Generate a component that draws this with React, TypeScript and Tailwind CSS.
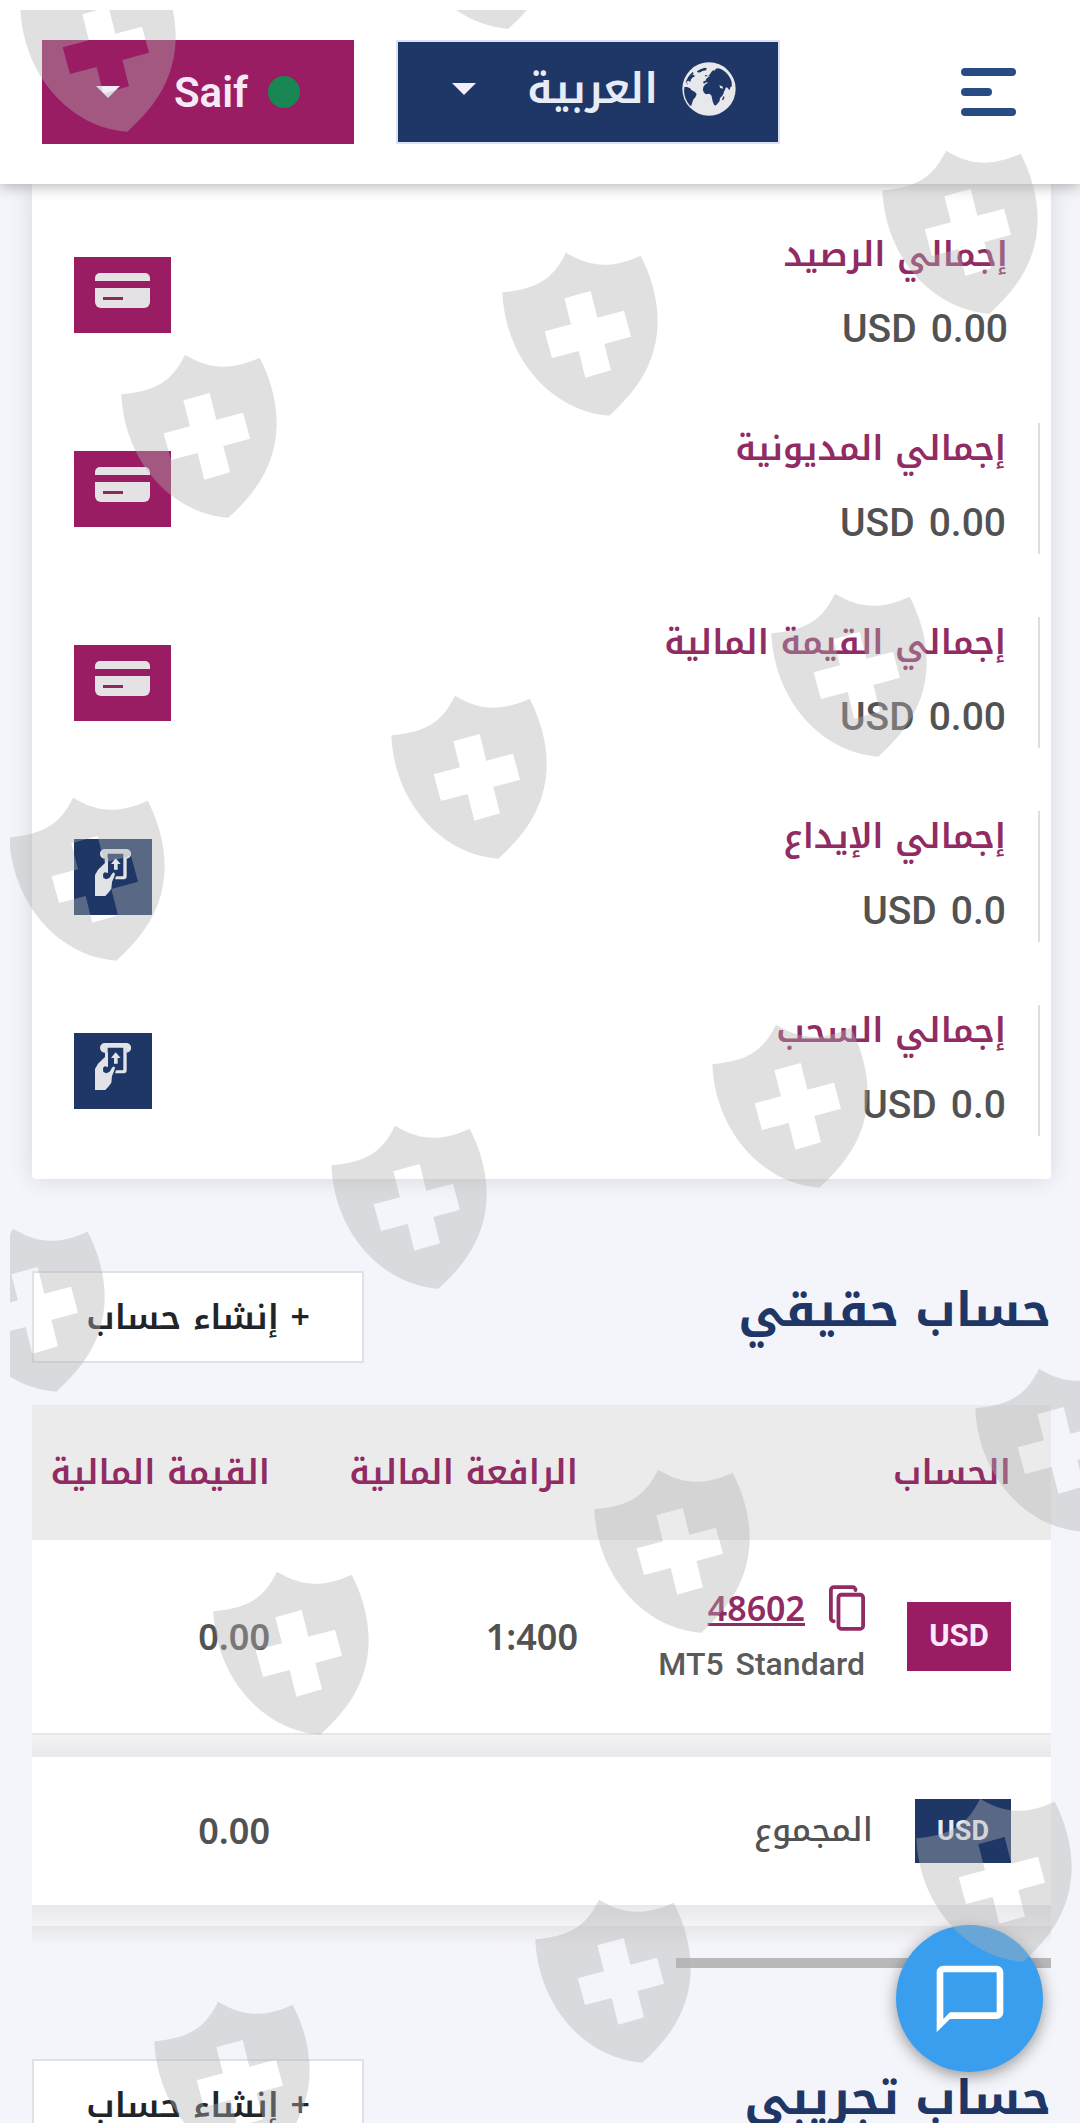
"use client"

import type React from "react"

import { MdChatBubbleOutline } from "react-icons/md"

const arabic = "font-['Noto_Kufi_Arabic','Droid_Arabic_Kufi','Noto_Sans_Arabic','DejaVu_Sans',sans-serif]"
const latin = "font-[Roboto,sans-serif]"

type Summary = { label: string; amount: string; kind: "card" | "cash" }

const summaries: Summary[] = [
  { label: "إجمالي الرصيد", amount: "0.00", kind: "card" },
  { label: "إجمالي المديونية", amount: "0.00", kind: "card" },
  { label: "إجمالي القيمة المالية", amount: "0.00", kind: "card" },
  { label: "إجمالي الإيداع", amount: "0.0", kind: "cash" },
  { label: "إجمالي السحب", amount: "0.0", kind: "cash" },
]

// Shield positions inside the overlay, [left, top]
const shields = [
  [8, -44],
  [389, -147],
  [870, 138],
  [490, 240],
  [109, 342],
  [759, 581],
  [379, 683],
  [-3, 785],
  [700, 1012],
  [319, 1113],
  [-63, 1216],
  [963, 1356],
  [582, 1457],
  [201, 1559],
  [904, 1786],
  [523, 1887],
  [142, 1989],
]

function Caret() {
  return (
    <svg viewBox="0 0 24 12" className="w-6 h-3 text-[#f4eefc]" fill="currentColor" aria-hidden="true">
      <path d="M0 0h24L12 12z" />
    </svg>
  )
}

function GlobeIcon() {
  return (
    <svg viewBox="16 15 158 158" className="w-[54px] h-[54px]" aria-hidden="true">
      <circle cx="95" cy="94" r="78" fill="#e6e8ec" />
      <g fill="#1e3766">
        <path d="M98 50l4-6 5-5 5 1 3-5 7-2 9 3c14 7 25 20 30 36l1 14-4 2-3 10-6-8-4-1-5 9-3-3-3-9-9-3 3 8 8 2 7 2-4 6-9 6-5-7-6-12-9 1-6-3-2-5-6 1-3-6-7-2-4 4-4-1 1-6 6-1 2-6 5-4 5-2-2-5-3 3-3 5z" />
        <path d="M86 79l8-3 8 0 3 4 8 1 7 2 4 9 6 10 9 1-4 9-8 9-1 8-5 7-6 6-5-1-4-10-2-9-2-9-6-5-10 1-6-5-3-8 2-9z" />
        <path d="M136 117l3-2 1 5-4 7-3-1z" />
        <path d="M23 88l8 0 9 4 3 5 11 6 5 6-4 9-6 7-3 9-3 9-4-1c-11-12-17-27-17-44z" />
        <path d="M27 74c4-12 11-22 20-30l3 3-4 7 5-2 3 5-7 3-5 6-2 8-4-4-6 2-1 5 5 2-2 2z" />
        <path d="M60 42l10-6 13-4 6 2-3 5-10 2-8 5-7-1z" />
        <path d="M83 54l7-1-2 4-5 0zM92 62l3-6 3 3-1 6-4 1z" />
      </g>
    </svg>
  )
}

function CardIcon() {
  return (
    <svg viewBox="0 0 55 35" className="w-[55px] h-[35px]" aria-hidden="true">
      <path d="M0 8V5a5 5 0 0 1 5-5h45a5 5 0 0 1 5 5v3z" fill="#e4e2e5" />
      <path d="M0 15h55v14a6 6 0 0 1-6 6H6a6 6 0 0 1-6-6z" fill="#e4e2e5" />
      <path d="M8 24h20v3H8z" fill="#8b2a58" />
    </svg>
  )
}

function CashIcon() {
  return (
    <svg viewBox="0 0 108 141" className="w-9 h-[47px]" aria-hidden="true">
      <g fill="#e1e3e7">
        <path d="M30 0h64a14 14 0 0 1 0 29V14H38v26l-7-11H29A14 14 0 0 1 30 0z" />
        <path d="M85 10h10v72a9 9 0 0 1-9 9H60l3-9h19a3 3 0 0 0 3-3z" />
        <path d="M30 28h9v34h-9z" />
        <path d="M0 141V78l9-16 21-20h9v30l-10-2-5 5 1 12 9 4 10-5 7-12 5-4 4 4-3 11-6 14-2 20-7 10-11 12z" />
        <path d="M62 28l15 17h-9v17H57V45h-9z" />
      </g>
    </svg>
  )
}

function CopyIcon() {
  return (
    <svg viewBox="0 0 38 48" className="w-9 h-[46px]" fill="none" stroke="#912b63" strokeWidth="4" aria-hidden="true">
      <rect x="10" y="10" width="26" height="36" rx="3" />
      <path d="M28 5a3 3 0 0 0-3-3H5a3 3 0 0 0-3 3v30a3 3 0 0 0 3 3" strokeLinecap="round" />
    </svg>
  )
}

function Money({ amount }: { amount: string }) {
  return (
    <div dir="ltr" className={`${latin} flex justify-end gap-3.5 text-[39px] leading-[44px] font-medium text-[#525252]`}>
      <span>USD</span>
      <span>{amount}</span>
    </div>
  )
}

function SummaryRow({ item, divided }: { item: Summary; divided: boolean }) {
  return (
    <div
      className={`flex items-center justify-between mr-[11px] h-[131px] pl-[42px] ${
        divided ? "pr-8 border-r-2 border-[#dedede]" : "pr-8"
      }`}
    >
      <div className="flex flex-col gap-7 pb-2">
        <span className="text-[34px] leading-[48px] text-[#912b63] font-semibold">{item.label}</span>
        <Money amount={item.amount} />
      </div>
      {item.kind === "card" ? (
        <div className="flex items-start justify-center w-[97px] h-[76px] pt-4 bg-[#9a1d63]">
          <CardIcon />
        </div>
      ) : (
        <div className="flex items-start justify-center w-[78px] h-[76px] pt-2.5 bg-[#1e3766]">
          <CashIcon />
        </div>
      )}
    </div>
  )
}

function SectionHeading({ title }: { title: string }) {
  return (
    <div className="flex items-start justify-between h-[92px]">
      <h2 className="text-[47px] leading-[80px] font-bold text-[#1e3766]">{title}</h2>
      <button
        type="button"
        className="h-[92px] w-[332px] border-2 border-[#dee2e6] bg-white text-[34px] font-semibold text-[#212529]"
      >
        + إنشاء حساب
      </button>
    </div>
  )
}

function HeadCell({ children, className }: { children: React.ReactNode; className?: string }) {
  return (
    <th scope="col" className={`h-[135px] pr-10 text-right text-[34px] font-semibold text-[#912b63] ${className ?? ""}`}>
      {children}
    </th>
  )
}

function NumberCell({ children }: { children?: React.ReactNode }) {
  return (
    <td className="pr-10 text-right font-['Noto_Sans',sans-serif] text-[36px] font-semibold text-[#525252]">
      {children && <span dir="ltr">{children}</span>}
    </td>
  )
}

function AccountsTable() {
  return (
    <table className="w-full table-fixed border-collapse">
      <thead className="bg-[#ebebeb]">
        <tr>
          <HeadCell className="w-[433px]">الحساب</HeadCell>
          <HeadCell className="w-[308px]">الرافعة المالية</HeadCell>
          <HeadCell>القيمة المالية</HeadCell>
        </tr>
      </thead>
      <tbody>
        <tr className="h-[194px] bg-white">
          <td className="pr-10">
            <div className="flex items-center gap-[42px]">
              <span className={`${latin} flex items-center justify-center w-[104px] h-[69px] bg-[#9a1d63] text-[31px] font-bold text-[#fbe9fb]`}>
                USD
              </span>
              <div className="flex flex-col gap-3.5 pb-2">
                <div className="flex items-center gap-6">
                  <button type="button" aria-label="نسخ">
                    <CopyIcon />
                  </button>
                  <a
                    href="#48602"
                    className="font-['Noto_Sans',sans-serif] text-[34px] leading-[48px] font-semibold text-[#912b63] underline decoration-[3px]"
                  >
                    48602
                  </a>
                </div>
                <div dir="ltr" className={`${latin} flex justify-end gap-3 text-[32px] leading-[36px] font-medium text-[#5a5a5a]`}>
                  <span>MT5</span>
                  <span>Standard</span>
                </div>
              </div>
            </div>
          </td>
          <NumberCell>1:400</NumberCell>
          <NumberCell>0.00</NumberCell>
        </tr>
        <tr aria-hidden="true">
          <td colSpan={3} className="h-[23px] p-0 border-t-2 border-[#e6e6e8] bg-linear-to-b from-[#f3f3f4] to-[#e8e8ed]" />
        </tr>
        <tr className="h-[148px] bg-white">
          <td className="pr-10">
            <div className="flex items-center gap-[42px]">
              <span className={`${latin} flex items-center justify-center w-24 h-16 bg-[#1e3766] text-[27px] font-bold text-[#e8ebf5]`}>
                USD
              </span>
              <span className="text-[33px] font-medium text-[#525252]">المجموع</span>
            </div>
          </td>
          <NumberCell />
          <NumberCell>0.00</NumberCell>
        </tr>
        <tr aria-hidden="true">
          <td colSpan={3} className="h-[21px] p-0 bg-linear-to-b from-[#e8e8ec] to-[#f3f3f8]" />
        </tr>
        <tr aria-hidden="true">
          <td colSpan={3} className="h-5 p-0 bg-linear-to-b from-[#e6e6ea] to-[#f4f5fa]" />
        </tr>
      </tbody>
    </table>
  )
}

function TopBar() {
  return (
    <header className="relative z-10 flex items-center justify-between h-[184px] pr-16 pl-[42px] bg-white shadow-[0_2px_14px_rgba(0,0,0,0.3)]">
      <button type="button" aria-label="القائمة" className="flex flex-col gap-3 w-[55px]">
        <span className="w-full h-2 rounded-full bg-[#284b84]" />
        <span className="w-[31px] h-2 rounded-full bg-[#284b84] self-end" />
        <span className="w-full h-2 rounded-full bg-[#284b84]" />
      </button>
      <div className="flex gap-[42px]">
        <button
          type="button"
          aria-haspopup="menu"
          className="flex items-center w-[384px] h-[104px] pr-[42px] pb-1.5 pl-[54px] bg-[#1e3766] border-2 border-[#d9e3f3] text-[#e6ebf6]"
        >
          <GlobeIcon />
          <span className="mr-6 text-[42px] font-semibold">العربية</span>
          <span className="mr-auto">
            <Caret />
          </span>
        </button>
        <button
          type="button"
          aria-haspopup="menu"
          className="flex items-center w-[312px] h-[104px] pr-[54px] pl-[54px] bg-[#9a1d63] text-[#f5e9f8]"
        >
          <span className="w-8 h-8 rounded-full bg-[#198754]" />
          <span className={`${latin} mr-5 text-[42px] font-semibold`}>Saif</span>
          <span className="mr-auto">
            <Caret />
          </span>
        </button>
      </div>
    </header>
  )
}

function ShieldOverlay() {
  return (
    <div dir="ltr" className="absolute left-2.5 top-2.5 right-0 bottom-0 z-30 overflow-hidden pointer-events-none" aria-hidden="true">
      {shields.map(([left, top]) => (
        <svg
          key={`${left}-${top}`}
          viewBox="60 60 480 504"
          className="absolute w-[160px] h-[168px]"
          style={{ left, top }}
          fill="#b2b2b2"
          fillOpacity="0.4"
        >
          <path
            fillRule="evenodd"
            d="M67 187C160 177 215 157 258 68C335 115 400 114 482 77C512 135 534 205 533 280C530 390 480 475 388 557C215 545 75 385 67 187ZM253 205L273 283L194 304L216 384L296 363L316 443L393 421L373 342L453 320L432 242L352 263L332 183Z"
          />
        </svg>
      ))}
    </div>
  )
}

export default function App() {
  return (
    <div dir="rtl" lang="ar" className={`${arabic} relative flex flex-col h-screen overflow-hidden bg-[#f4f5fa]`}>
      <TopBar />
      <main className="flex-1 overflow-hidden pl-8 pr-[29px]">
        <section className="flex flex-col gap-[63px] pt-[45px] pb-[43px] bg-white rounded-b shadow-[0_0_24px_rgba(0,0,0,0.12)]">
          {summaries.map((item, index) => (
            <SummaryRow key={item.label} item={item} divided={index > 0} />
          ))}
        </section>

        <section className="pt-[92px]">
          <SectionHeading title="حساب حقيقي" />
          <div className="mt-[42px]">
            <AccountsTable />
            <div className="mt-3 w-[375px] h-2.5 bg-[#b9b9bb]" />
          </div>
        </section>

        <section className="pt-[91px]">
          <SectionHeading title="حساب تجريبي" />
        </section>
      </main>

      <button
        type="button"
        aria-label="محادثة"
        className="absolute right-[37px] bottom-[51px] z-20 flex items-center justify-center w-[147px] h-[147px] rounded-full bg-[#3a9eef] text-white shadow-[0_4px_16px_rgba(0,0,0,0.4)]"
      >
        <MdChatBubbleOutline size={80} />
      </button>

      <ShieldOverlay />
    </div>
  )
}
